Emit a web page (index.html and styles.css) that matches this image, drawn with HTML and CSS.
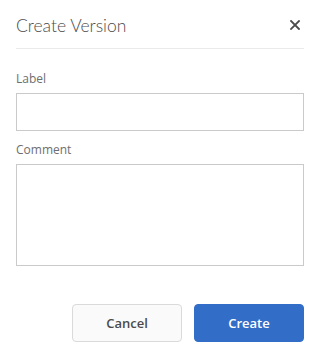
FILE: index.html
```html
<!DOCTYPE html>
<html lang="en">
<head>
    <meta charset="UTF-8">
    <meta name="viewport" content="width=device-width, initial-scale=1.0">
    <title>Create Version</title>
    <link rel="stylesheet" href="styles.css">
</head>
<body>
    <div class="dialog">
        <!-- Header -->
        <div class="dialog-header">
            <h2>Create Version</h2>
            <button class="close" aria-label="Close">
                <svg width="10" height="10" viewBox="0 0 10 10">
                    <path d="M1 1 L9 9 M9 1 L1 9" stroke="#4b4b4b" stroke-width="1.8" stroke-linecap="square"/>
                </svg>
            </button>
        </div>

        <!-- Form -->
        <div class="dialog-body">
            <label class="field-label" for="label">Label</label>
            <input type="text" id="label" class="field">

            <label class="field-label" for="comment">Comment</label>
            <textarea id="comment" class="field area"></textarea>
        </div>

        <!-- Footer -->
        <div class="dialog-footer">
            <button class="btn secondary">Cancel</button>
            <button class="btn primary">Create</button>
        </div>
    </div>
</body>
</html>
```

FILE: styles.css
```css
/* Global Styles */
body {
    margin: 0;
    padding: 0;
    background: #fff;
    font-family: 'Open Sans', sans-serif;
    color: #4b4b4b;
}

.dialog {
    width: 320px;
    height: 358px;
    box-sizing: border-box;
    padding: 0 16px;
    display: flex;
    flex-direction: column;
}

/* Header */
.dialog-header {
    height: 48px;
    border-bottom: 1px solid #eaeaea;
    display: flex;
    align-items: center;
    justify-content: space-between;
}

.dialog-header h2 {
    margin: 0;
    padding-top: 2px;
    font-family: 'Lato', sans-serif;
    font-weight: 300;
    font-size: 17.5px;
    color: #4b4b4b;
}

.close {
    background: none;
    border: none;
    padding: 0;
    margin-right: 4px;
    margin-top: 2px;
    width: 10px;
    height: 10px;
    display: flex;
    cursor: pointer;
}

/* Form */
.dialog-body {
    display: flex;
    flex-direction: column;
}

.field-label {
    font-size: 12px;
    color: #6e6e6e;
    line-height: 16px;
    margin: 22px 0 6px;
}

.field {
    height: 38px;
    box-sizing: border-box;
    border: 1px solid #cacaca;
    border-radius: 0;
    padding: 6px 10px;
    font-family: inherit;
    font-size: 14px;
    outline: none;
    margin: 0;
}

.field + .field-label {
    margin-top: 11px;
}

.area {
    height: 102px;
    resize: none;
}

/* Footer */
.dialog-footer {
    margin-top: 38px;
    display: flex;
    justify-content: flex-end;
    gap: 12px;
}

.btn {
    width: 110px;
    height: 38px;
    border-radius: 4px;
    font-family: 'Open Sans', sans-serif;
    font-size: 13px;
    font-weight: 600;
    cursor: pointer;
}

.secondary {
    background: #fafafa;
    border: 1px solid #dadada;
    color: #4b4b4b;
}

.primary {
    background: #326ec8;
    border: 1px solid #326ec8;
    color: #fff;
}
```
